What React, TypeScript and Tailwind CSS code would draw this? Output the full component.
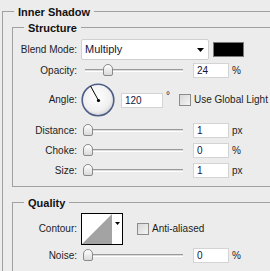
import React from "react";

function Title({ children }: { children: React.ReactNode }) {
  return (
    <div className="-mt-[7px] ml-[11px] px-[4px] w-fit h-[14px] leading-[14px] bg-[#ececec] font-bold text-[11px] text-[#111]">
      {children}
    </div>
  );
}

function Label({ children }: { children: React.ReactNode }) {
  return <div className="w-[64px] text-right shrink-0 leading-[12px]">{children}</div>;
}

function Slider({ pos }: { pos: number }) {
  return (
    <div className="relative ml-[4px] w-[112px] h-[15px] shrink-0">
      <div className="absolute left-[4px] top-[6px] w-[98px] h-[3px] border-t border-[#9a9a9a] bg-[#dcdcdc] border-b border-b-white" />
      <div
        className="absolute top-[1px] w-[10px] h-[12px] rounded-t-[5px] rounded-b-[2px] border border-[#8a8a8a] bg-gradient-to-b from-white to-[#dadada]"
        style={{ left: pos }}
      />
    </div>
  );
}

function Input({ value, w = 36 }: { value: string; w?: number }) {
  return (
    <div
      className="h-[15px] bg-white border border-[#d4d4d4] pl-[3px] leading-[13px] text-[#14143c] shrink-0"
      style={{ width: w }}
    >
      {value}
    </div>
  );
}

function Check() {
  return (
    <div className="w-[12px] h-[12px] border border-[#8c8c8c] bg-gradient-to-br from-[#d8d8d8] to-[#f4f4f4] shrink-0" />
  );
}

function SliderRow({ label, pos, value, unit, mt }: { label: string; pos: number; value: string; unit: string; mt: string }) {
  return (
    <div className={`flex items-center h-[15px] ${mt}`}>
      <Label>{label}</Label>
      <Slider pos={pos} />
      <Input value={value} />
      <div className="ml-[3px] leading-[12px]">{unit}</div>
    </div>
  );
}

export default function App() {
  return (
    <div className="w-[270px] h-[271px] overflow-hidden bg-[#ececec] font-['Liberation_Sans',Arial,sans-serif] text-[10px] text-[#1c1c1c]">
      <div className="pt-[11px] pl-[2px]">
        <div className="w-[320px] h-[300px] border-l border-t border-[#a0a0a0]">
          <Title>Inner Shadow</Title>
          <div className="ml-[9px] mt-[8px] w-[300px] border-l border-t border-b border-[#a0a0a0] pb-[8px]">
            <Title>Structure</Title>
            <div className="flex items-center h-[21px] mt-[4px]">
              <Label>Blend Mode:</Label>
              <div className="ml-[4px] w-[128px] h-[21px] bg-white border border-[#d0d0d0] rounded-[2px] flex items-center justify-between pl-[3px] pr-[4px] shrink-0">
                <span className="text-[11px] text-[#14143c]">Multiply</span>
                <svg width="7" height="4" viewBox="0 0 7 4">
                  <polygon points="0,0 7,0 3.5,4" fill="#000" />
                </svg>
              </div>
              <div className="ml-[4px] w-[31px] h-[15px] bg-black border border-[#7a7a7a] shrink-0" />
            </div>
            <SliderRow label="Opacity:" pos={22} value="24" unit="%" mt="mt-[3px]" />
            <div className="flex items-center h-[34px] mt-[5px]">
              <Label>Angle:</Label>
              <svg className="ml-[4px] shrink-0" width="34" height="34" viewBox="0 0 34 34">
                <defs>
                  <radialGradient id="g" cx="45%" cy="40%" r="60%">
                    <stop offset="0%" stopColor="#ffffff" />
                    <stop offset="75%" stopColor="#f0f0f0" />
                    <stop offset="100%" stopColor="#d4d4d8" />
                  </radialGradient>
                </defs>
                <circle cx="17" cy="17" r="15.8" fill="url(#g)" stroke="#4e5e86" strokeWidth="1.6" />
                <line x1="17.5" y1="17.5" x2="9.5" y2="3" stroke="#000" strokeWidth="1" />
                <circle cx="17.5" cy="17.5" r="1.6" fill="#000" />
              </svg>
              <div className="ml-[6px]">
                <Input value="120" w={42} />
              </div>
              <div className="w-[16px] pl-[3px] self-start mt-[8px] leading-[10px]">°</div>
              <Check />
              <div className="ml-[3px] leading-[12px] whitespace-nowrap">Use Global Light</div>
            </div>
            <SliderRow label="Distance:" pos={2} value="1" unit="px" mt="mt-[6px]" />
            <SliderRow label="Choke:" pos={2} value="0" unit="%" mt="mt-[5px]" />
            <SliderRow label="Size:" pos={2} value="1" unit="px" mt="mt-[5px]" />
          </div>
          <div className="ml-[9px] mt-[15px] w-[300px] h-[100px] border-l border-t border-[#a0a0a0]">
            <Title>Quality</Title>
            <div className="flex items-center h-[32px] mt-[3px]">
              <Label>Contour:</Label>
              <div className="ml-[4px] w-[42px] h-[32px] border border-black bg-white flex shrink-0">
                <svg width="30" height="30" viewBox="0 0 30 30" className="shrink-0">
                  <polygon points="0,30 30,0 30,30" fill="#a3a3a3" />
                </svg>
                <div className="flex-1 flex items-start justify-center pt-[8px]">
                  <svg width="5" height="3" viewBox="0 0 5 3">
                    <polygon points="0,0 5,0 2.5,3" fill="#000" />
                  </svg>
                </div>
              </div>
              <div className="ml-[14px]">
                <Check />
              </div>
              <div className="ml-[3px] leading-[12px] whitespace-nowrap">Anti-aliased</div>
            </div>
            <SliderRow label="Noise:" pos={2} value="0" unit="%" mt="mt-[3px]" />
          </div>
        </div>
      </div>
    </div>
  );
}
